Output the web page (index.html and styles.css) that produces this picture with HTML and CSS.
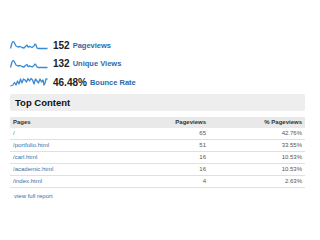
FILE: index.html
```html
<!DOCTYPE html>
<html lang="en">
<head>
    <meta charset="UTF-8">
    <title>Site stats</title>
    <link rel="stylesheet" href="styles.css">
</head>
<body>

<div class="stats">
    <div class="stat">
        <svg class="spark" width="38" height="10" viewBox="0 0 38 10">
            <polyline points="0.5,8.5 2,3 3,1.5 4,2 6,6 8,7 10,6.5 12,7.5 14,8 16,6 17,5 18,7 20,6.5 22,7.5 24,6 25,4 26,5 27,8 28,8.5 37.5,8.5"/>
        </svg>
        <span class="num">152</span> <span class="label">Pageviews</span>
    </div>
    <div class="stat">
        <svg class="spark" width="38" height="10" viewBox="0 0 38 10">
            <polyline points="0.5,8.5 2,3 3,1.5 4,2 6,6 8,7 10,6.5 12,7.5 14,8 16,6 17,5.5 18,7.5 20,7 22,8 24,6.5 25,5 26,6 27,8 28,8.5 37.5,8.5"/>
        </svg>
        <span class="num">132</span> <span class="label">Unique Views</span>
    </div>
    <div class="stat">
        <svg class="spark" width="38" height="10" viewBox="0 0 38 10">
            <polyline points="0.5,9 3,8 4.5,5.5 6,8 7.5,4 9,7 10.5,2 12,6 13.5,2 15,3 16.5,5 18,1.5 19.5,4 21,1.5 22.5,3 24,7 25.5,2 27,4 28.5,6 30,2 31.5,5 33,3 34,8 35,6 36,2 37.5,2"/>
        </svg>
        <span class="num">46.48%</span> <span class="label">Bounce Rate</span>
    </div>
</div>

<div class="panel">
    <h2>Top Content</h2>
    <table class="pages">
        <tr>
            <th class="page">Pages</th>
            <th class="count">Pageviews</th>
            <th class="pct">% Pageviews</th>
        </tr>
        <tr><td class="page"><a href="#">/</a></td><td class="count">65</td><td class="pct">42.76%</td></tr>
        <tr><td class="page"><a href="#">/portfolio.html</a></td><td class="count">51</td><td class="pct">33.55%</td></tr>
        <tr><td class="page"><a href="#">/carl.html</a></td><td class="count">16</td><td class="pct">10.53%</td></tr>
        <tr><td class="page"><a href="#">/academic.html</a></td><td class="count">16</td><td class="pct">10.53%</td></tr>
        <tr><td class="page"><a href="#">/index.html</a></td><td class="count">4</td><td class="pct">2.63%</td></tr>
    </table>
    <a class="more" href="#">view full report</a>
</div>

</body>
</html>
```

FILE: styles.css
```css
body {
    font-family: "Liberation Sans", Arial, sans-serif;
    background-color: #fff;
    margin: 0;
    padding: 0;
    width: 320px;
    height: 240px;
}

.stats {
    padding: 36px 0 0 10px;
}

.stat {
    display: flex;
    align-items: center;
    height: 18.5px;
}

.spark {
    margin-right: 5px;
}

.spark polyline {
    fill: none;
    stroke: #3c8ad0;
    stroke-width: 1.3;
    stroke-linejoin: round;
}

.num {
    font-size: 10px;
    font-weight: bold;
    color: #222;
    margin-right: 3px;
}

.label {
    font-size: 7.5px;
    font-weight: bold;
    color: #2d6aa8;
}

.panel {
    margin: 2px 15px 0 10px;
}

.panel h2 {
    margin: 0;
    background-color: #eeeeee;
    font-size: 9.5px;
    height: 17px;
    line-height: 17px;
    padding-left: 5px;
    color: #111;
    border-radius: 2px;
}

.pages {
    width: 100%;
    border-collapse: collapse;
    margin-top: 6px;
    font-size: 6px;
    color: #555;
}

.pages th {
    background-color: #e9e9e9;
    font-weight: bold;
    height: 11px;
    padding: 0 3px;
    color: #333;
}

.pages td {
    height: 11px;
    padding: 0 3px;
    border-bottom: 1px solid #e0e0e0;
}

.page {
    text-align: left;
}

.count {
    text-align: right;
    width: 120px;
}

.pct {
    text-align: right;
    width: 90px;
}

.pages a, .more {
    color: #3a70a8;
    text-decoration: none;
}

.more {
    display: block;
    font-size: 6px;
    margin: 5px 0 0 4px;
}
```
